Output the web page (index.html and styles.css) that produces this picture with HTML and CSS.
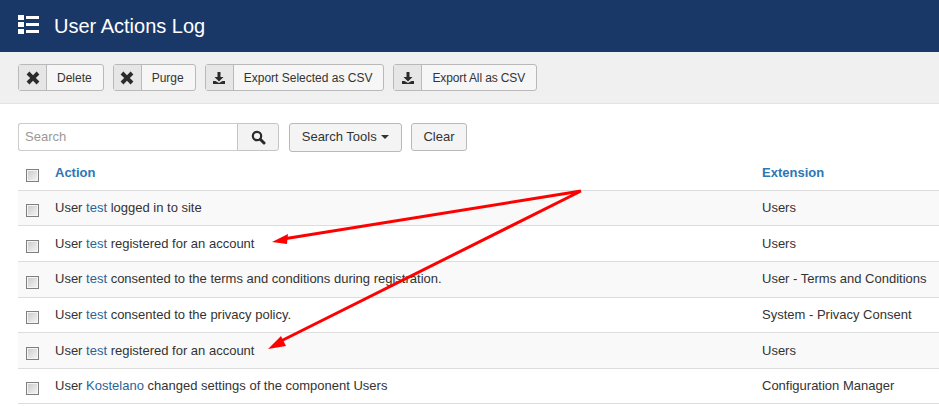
FILE: index.html
```html
<!DOCTYPE html>
<html lang="en">
<head>
<meta charset="utf-8">
<title>User Actions Log</title>
<link rel="stylesheet" href="styles.css">
</head>
<body>
<header class="topbar">
  <svg class="topicon" width="21" height="20" viewBox="0 0 21 20"><path fill="#fff" d="M0 0h6v5H0zM0 7h6v5H0zM0 14h6v5H0zM8 1h13v3H8zM8 8h13v3H8zM8 15h13v3H8z"/></svg>
  <h1 class="title">User Actions Log</h1>
</header>
<div class="toolbar">
  <button class="tbtn"><span class="tico"><svg width="14" height="14" viewBox="0 0 14 14"><path fill="#2b2b2b" d="M3.400.6 7 4.200 10.600.6 13.400 3.400 9.800 7l3.600 3.600-2.800 2.800L7 9.800l-3.600 3.600-2.800-2.800L4.200 7 .6 3.400z"/></svg></span><span class="tlabel">Delete</span></button>
  <button class="tbtn"><span class="tico"><svg width="14" height="14" viewBox="0 0 14 14"><path fill="#2b2b2b" d="M3.400.6 7 4.200 10.600.6 13.400 3.400 9.800 7l3.600 3.600-2.800 2.800L7 9.800l-3.600 3.600-2.800-2.800L4.200 7 .6 3.400z"/></svg></span><span class="tlabel">Purge</span></button>
  <button class="tbtn"><span class="tico"><svg width="14" height="14" viewBox="0 0 14 14"><path fill="#2b2b2b" d="M5.500 1h3v5h3L7 10.500 2.500 6h3zM1 10h2.500L7 12l3.500-2H13v3H1z"/></svg></span><span class="tlabel">Export Selected as CSV</span></button>
  <button class="tbtn"><span class="tico"><svg width="14" height="14" viewBox="0 0 14 14"><path fill="#2b2b2b" d="M5.500 1h3v5h3L7 10.500 2.500 6h3zM1 10h2.500L7 12l3.500-2H13v3H1z"/></svg></span><span class="tlabel tight">Export All as CSV</span></button>
</div>
<main class="content">
  <div class="filters">
    <div class="search">
      <input class="sinput" type="text" placeholder="Search">
      <button class="sbtn"><svg width="15" height="15" viewBox="0 0 15 15"><circle cx="6" cy="6" r="4.200" fill="none" stroke="#2b2b2b" stroke-width="2.200"/><path stroke="#2b2b2b" stroke-width="3" stroke-linecap="round" d="M9.500 9.500 13 13"/></svg></button>
    </div>
    <button class="fbtn tools">Search Tools <span class="caret"></span></button>
    <button class="fbtn clear">Clear</button>
  </div>
  <table class="log">
    <thead>
      <tr><th class="chk"><input type="checkbox"></th><th class="act">Action</th><th class="ext">Extension</th></tr>
    </thead>
    <tbody>
      <tr class="short"><td class="chk"><input type="checkbox"></td><td>User <a>test</a> logged in to site</td><td>Users</td></tr>
      <tr class="tall"><td class="chk"><input type="checkbox"></td><td>User <a>test</a> registered for an account</td><td>Users</td></tr>
      <tr class="tall lift"><td class="chk"><input type="checkbox"></td><td>User <a>test</a> consented to the terms and conditions during registration.</td><td>User - Terms and Conditions</td></tr>
      <tr class="short"><td class="chk"><input type="checkbox"></td><td>User <a>test</a> consented to the privacy policy.</td><td>System - Privacy Consent</td></tr>
      <tr class="tall"><td class="chk"><input type="checkbox"></td><td>User <a>test</a> registered for an account</td><td>Users</td></tr>
      <tr class="short"><td class="chk"><input type="checkbox"></td><td>User <a>Kostelano</a> changed settings of the component Users</td><td>Configuration Manager</td></tr>
    </tbody>
  </table>
</main>
<svg class="arrows" width="939" height="406" viewBox="0 0 939 406">
  <path fill="none" stroke="#f00" stroke-width="3" d="M581 191 283 239M581 191 279 342"/>
  <path fill="#f00" d="M272 242 288 234 287 244zM268 349 281 336 286 346z"/>
</svg>
</body>
</html>
```
FILE: styles.css
```css
* { box-sizing: border-box; }
html, body { margin: 0; padding: 0; }
body {
  position: relative;
  width: 939px;
  height: 406px;
  overflow: hidden;
  background: #fff;
  font-family: "Liberation Sans", Arial, sans-serif;
  font-size: 13px;
  color: #333;
}
.topbar {
  height: 52px;
  background: #1a3867;
  display: flex;
  align-items: center;
  padding-left: 18px;
}
.topicon { display: block; margin-top: -3px; }
.title {
  margin: 0 0 0 15px;
  font-size: 20px;
  font-weight: 400;
  color: #fff;
  line-height: 52px;
}
.toolbar {
  height: 52px;
  background: #f0f0f0;
  border-bottom: 1px solid #e3e3e3;
  display: flex;
  align-items: flex-start;
  gap: 9px;
  padding: 12px 0 0 18px;
}
.tbtn {
  display: flex;
  height: 27px;
  padding: 0;
  background: #f6f6f6;
  border: 1px solid #b9b9b9;
  border-radius: 3px;
  font: 12px "Liberation Sans", Arial, sans-serif;
  color: #333;
}
.tico {
  width: 28px;
  height: 25px;
  background: #e6e6e6;
  border-right: 1px solid #b9b9b9;
  display: flex;
  align-items: center;
  justify-content: center;
}
.tlabel { padding: 1px 11px 0 10px; line-height: 25px; }
.tight { letter-spacing: -0.12px; }
.content { padding: 18px 0 0 18px; }
.filters { display: flex; align-items: center; height: 30px; }
.search { display: flex; width: 261px; height: 28px; }
.sinput {
  width: 219px;
  height: 28px;
  padding: 0 6px 2px;
  border: 1px solid #ccc;
  border-right: 0;
  border-radius: 3px 0 0 3px;
  font: 13px "Liberation Sans", Arial, sans-serif;
  outline: none;
}
.sinput::placeholder { color: #999; opacity: 1; }
.sbtn {
  width: 42px;
  height: 28px;
  padding: 0;
  background: #f3f3f3;
  border: 1px solid #c4c4c4;
  border-radius: 0 3px 3px 0;
  display: flex;
  align-items: center;
  justify-content: center;
}
.fbtn {
  background: #f4f4f4;
  border: 1px solid #b9b9b9;
  border-radius: 3px;
  padding: 0 0 2px;
  font: 13px "Liberation Sans", Arial, sans-serif;
  color: #333;
}
.tools { margin-left: 10px; width: 113px; height: 29px; }
.clear { margin-left: 9px; width: 56px; height: 28px; }
.caret {
  display: inline-block;
  width: 0;
  height: 0;
  margin-left: 1px;
  vertical-align: middle;
  border-top: 4px solid #333;
  border-left: 4px solid transparent;
  border-right: 4px solid transparent;
}
.log {
  width: 921px;
  margin-top: 3px;
  border-collapse: collapse;
  table-layout: fixed;
}
.log th {
  height: 35px;
  text-align: left;
  color: #2d76b5;
  font-weight: 700;
  border-bottom: 1px solid #ddd;
  padding: 0;
}
.log td {
  padding: 0;
  border-bottom: 1px solid #ddd;
}
.short td { height: 35px; }
.tall td { height: 36px; }
.log .lift td:not(.chk) { padding-bottom: 2px; }
.log tbody tr:nth-child(odd) { background: #f9f9f9; }
.log a { color: #2a6496; }
.chk { width: 37px; }
.act { width: 707px; }
.chk input {
  appearance: none;
  display: block;
  width: 13px;
  height: 13px;
  margin: 6px 0 0 8px;
  background: linear-gradient(135deg, #c9c9c9, #f6f6f6);
  border: 1px solid #7f7f7f;
  box-shadow: inset 0 0 0 1px #f4f4f4;
}
.arrows { position: absolute; left: 0; top: 0; pointer-events: none; }
```
